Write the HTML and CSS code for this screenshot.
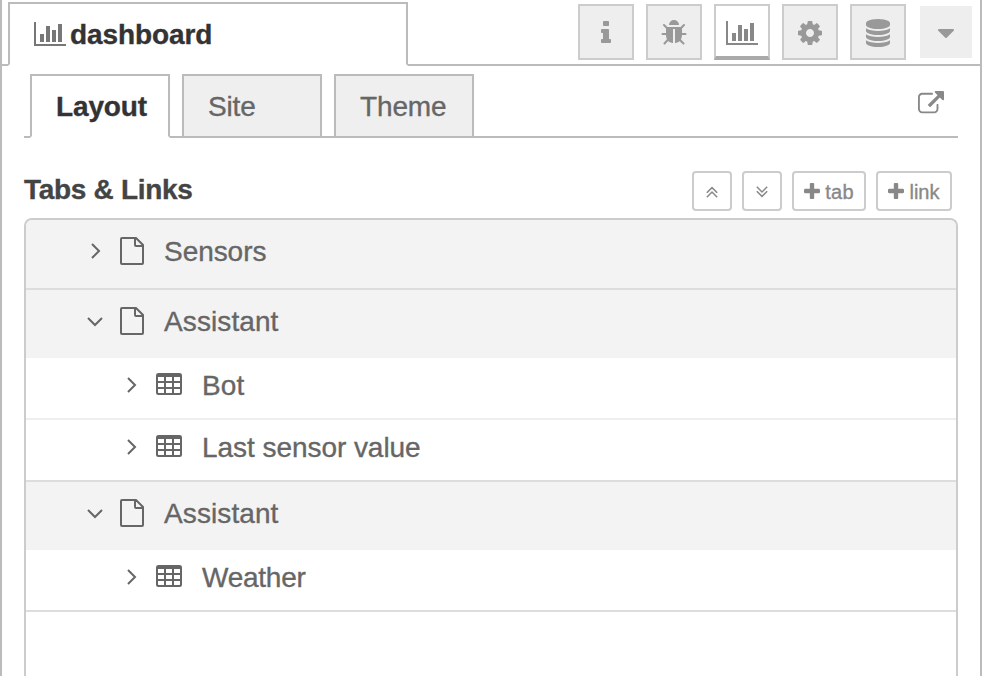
FILE: index.html
```
<!DOCTYPE html>
<html lang="en">
<head>
<meta charset="utf-8">
<title>dashboard</title>
<link rel="stylesheet" href="styles.css">
</head>
<body>
<svg class="defs" aria-hidden="true">
  <symbol id="chart" viewBox="0 0 2048 1792"><path d="M640 896v512h-256v-512h256zm384-512v1024h-256v-1024h256zm1024 1152v128h-2048v-1536h128v1408h1920zm-640-896v768h-256v-768h256zm384-384v1152h-256v-1152h256z"/></symbol>
  <symbol id="file" viewBox="0 0 24 28"><path class="line" d="M16 1H2Q1 1 1 2V26Q1 27 2 27H22Q23 27 23 26V8ZM15 1V8Q15 9 16 9H23"/></symbol>
  <symbol id="table" viewBox="0 0 26 22"><path fill-rule="evenodd" d="M2.5 0H23.5Q26 0 26 2.5V19.5Q26 22 23.500 22H2.500Q0 22 0 19.500V2.500Q0 0 2.500 0ZM2 4V8H8V4ZM10 4V8H16V4ZM18 4V8H24V4ZM2 10V14H8V10ZM10 10V14H16V10ZM18 10V14H24V10ZM2 16V19.500L2.500 20H8V16ZM10 16V20H16V16ZM18 16V20H23.500L24 19.500V16Z"/></symbol>
  <symbol id="right" viewBox="0 0 18 18"><path class="line" d="M6 2 13 9 6 16"/></symbol>
  <symbol id="down" viewBox="0 0 18 18"><path class="line" d="M2 6 9 13 16 6"/></symbol>
  <symbol id="plus" viewBox="192 128 1408 1408"><path d="M1600 736v192q0 40-28 68t-68 28h-416v416q0 40-28 68t-68 28h-192q-40 0-68-28t-28-68v-416h-416q-40 0-68-28t-28-68v-192q0-40 28-68t68-28h416v-416q0-40 28-68t68-28h192q40 0 68 28t28 68v416h416q40 0 68 28t28 68z"/></symbol>
</svg>
<div class="sidebar">
  <header class="topbar">
    <div class="main-tab"><svg class="chart"><use href="#chart"/></svg><span>dashboard</span></div>
    <nav class="tools">
      <button class="tool"><svg viewBox="0 0 1792 1792"><path d="M1216 1344v128q0 26-19 45t-45 19h-512q-26 0-45-19t-19-45v-128q0-26 19-45t45-19h64v-384h-64q-26 0-45-19t-19-45v-128q0-26 19-45t45-19h384q26 0 45 19t19 45v576h64q26 0 45 19t19 45zm-128-1152v192q0 26-19 45t-45 19h-256q-26 0-45-19t-19-45v-192q0-26 19-45t45-19h256q26 0 45 19t19 45z"/></svg></button>
      <button class="tool"><svg viewBox="0 0 1792 1792"><path d="M1696 960q0 26-19 45t-45 19h-224q0 171-67 290l208 209q19 19 19 45t-19 45q-18 19-45 19t-45-19l-198-197q-5 5-15 13t-42 28.500-65 36.500-82 29-97 13v-896h-128v896q-51 0-101.500-13.500t-87-33-66-39-43.500-32.500l-15-14-183 207q-20 21-48 21-24 0-43-16-19-18-20.500-44.500t15.500-46.500l202-227q-58-114-58-274h-224q-26 0-45-19t-19-45 19-45 45-19h224v-294l-173-173q-19-19-19-45t19-45 45-19 45 19l173 173h844l173-173q19-19 45-19t45 19 19 45-19 45l-173 173v294h224q26 0 45 19t19 45zm-480-576h-640q0-133 93.500-226.500t226.500-93.500 226.500 93.500 93.500 226.500z"/></svg></button>
      <button class="tool active"><svg class="chart"><use href="#chart"/></svg></button>
      <button class="tool"><svg viewBox="0 0 1792 1792"><path d="M1152 896q0-106-75-181t-181-75-181 75-75 181 75 181 181 75 181-75 75-181zm512-109v222q0 12-8 23t-20 13l-185 28q-19 54-39 91 35 50 107 138 10 12 10 25t-9 23q-27 37-99 108t-94 71q-12 0-26-9l-138-108q-44 23-91 38-16 136-29 186-7 28-36 28h-222q-14 0-24.500-8.500t-11.500-21.500l-28-184q-49-16-90-37l-141 107q-10 9-25 9-14 0-25-11-126-114-165-168-7-10-7-23 0-12 8-23 15-21 51-66.500t54-70.500q-27-50-41-99l-183-27q-13-2-21-12.500t-8-23.500v-222q0-12 8-23t19-13l186-28q14-46 39-92-40-57-107-138-10-12-10-24 0-10 9-23 26-36 98.500-107.500t94.500-71.500q13 0 26 10l138 107q44-23 91-38 16-136 29-186 7-28 36-28h222q14 0 24.500 8.500t11.500 21.500l28 184q49 16 90 37l142-107q9-9 24-9 13 0 25 10 129 119 165 170 7 8 7 22 0 12-8 23-15 21-51 66.500t-54 70.500q26 50 41 98l183 28q13 2 21 12.500t8 23.500z"/></svg></button>
      <button class="tool"><svg viewBox="0 0 1792 1792"><path d="M896 768q237 0 443-43t325-127v170q0 69-103 128t-280 93.500-385 34.500-385-34.500-280-93.500-103-128v-170q119 84 325 127t443 43zm0 768q237 0 443-43t325-127v170q0 69-103 128t-280 93.500-385 34.500-385-34.500-280-93.500-103-128v-170q119 84 325 127t443 43zm0-384q237 0 443-43t325-127v170q0 69-103 128t-280 93.500-385 34.500-385-34.500-280-93.500-103-128v-170q119 84 325 127t443 43zm0-1152q208 0 385 34.500t280 93.500 103 128v128q0 69-103 128t-280 93.500-385 34.500-385-34.500-280-93.500-103-128v-128q0-69 103-128t280-93.500 385-34.500z"/></svg></button>
      <button class="tool more"><svg viewBox="0 0 1792 1792"><path d="M1408 704q0 26-19 45l-448 448q-19 19-45 19t-45-19l-448-448q-19-19-19-45t19-45 45-19h896q26 0 45 19t19 45z"/></svg></button>
    </nav>
  </header>
  <nav class="subtabs">
    <div class="subtab selected">Layout</div>
    <div class="subtab">Site</div>
    <div class="subtab">Theme</div>
    <svg class="external" viewBox="0 0 1792 1792"><path d="M1408 928v320q0 119-84.500 203.500t-203.500 84.500h-832q-119 0-203.500-84.500t-84.500-203.500v-832q0-119 84.500-203.500t203.500-84.500h704q14 0 23 9t9 23v64q0 14-9 23t-23 9h-704q-66 0-113 47t-47 113v832q0 66 47 113t113 47h832q66 0 113-47t47-113v-320q0-14 9-23t23-9h64q14 0 23 9t9 23zm384-864v512q0 26-19 45t-45 19-45-19l-176-176-652 652q-10 10-23 10t-23-10l-114-114q-10-10-10-23t10-23l652-652-176-176q-19-19-19-45t19-45 45-19h512q26 0 45 19t19 45z"/></svg>
  </nav>
  <section class="section-head">
    <h2>Tabs &amp; Links</h2>
    <div class="actions">
      <button class="action square"><svg viewBox="0 0 12 12"><path class="line" d="M.8 6.800 6 1.600 11.200 6.800M.8 11.200 6 6 11.200 11.200"/></svg></button>
      <button class="action square"><svg viewBox="0 0 12 12"><path class="line" d="M.8 .8 6 6 11.200 .8M.8 5.200 6 10.400 11.200 5.200"/></svg></button>
      <button class="action add-tab"><svg class="plus"><use href="#plus"/></svg><span>tab</span></button>
      <button class="action add-link"><svg class="plus"><use href="#plus"/></svg><span>link</span></button>
    </div>
  </section>
  <main class="tree">
    <div class="row tab"><svg class="chev"><use href="#right"/></svg><svg class="file"><use href="#file"/></svg><span>Sensors</span></div>
    <div class="row tab open"><svg class="chev"><use href="#down"/></svg><svg class="file"><use href="#file"/></svg><span class="assistant">Assistant</span></div>
    <div class="row group"><svg class="chev"><use href="#right"/></svg><svg class="table"><use href="#table"/></svg><span class="bot">Bot</span></div>
    <div class="row group last"><svg class="chev"><use href="#right"/></svg><svg class="table"><use href="#table"/></svg><span>Last sensor value</span></div>
    <div class="row tab open"><svg class="chev"><use href="#down"/></svg><svg class="file"><use href="#file"/></svg><span class="assistant">Assistant</span></div>
    <div class="row group last"><svg class="chev"><use href="#right"/></svg><svg class="table"><use href="#table"/></svg><span class="weather">Weather</span></div>
  </main>
</div>
</body>
</html>
```
FILE: styles.css
```
* { box-sizing: border-box; }
body {
  margin: 0;
  background: #fff;
  color: #666;
  font: 28px/32px "Liberation Sans", Arial, sans-serif;
  -webkit-text-stroke: 0.35px currentColor;
}
svg { display: block; flex: none; fill: currentColor; }
.defs { display: none; }
.line { fill: none; stroke: currentColor; stroke-width: 2; }
button { font: inherit; margin: 0; padding: 0; }

.sidebar {
  display: flex;
  flex-direction: column;
  height: 100vh;
  overflow: hidden;
  border: solid #bbb;
  border-width: 0 2px;
}

.topbar {
  display: flex;
  flex: none;
  justify-content: space-between;
  height: 66px;
  padding: 2px 8px 0 6px;
  border-bottom: 2px solid #bbb;
}
.main-tab {
  display: flex;
  width: 400px;
  height: 64px;
  padding: 15px 24px 0;
  gap: 4px;
  border: 2px solid #bbb;
  border-bottom-color: #fff;
  background: #fff;
  color: #333;
  font-weight: bold;
  letter-spacing: -0.1px;
}
.chart { width: 32px; height: 28px; }
.main-tab .chart { margin-top: 1px; color: #777; }

.tools { display: flex; gap: 12px; padding-top: 2px; }
.tool {
  display: flex;
  align-items: center;
  justify-content: center;
  width: 56px;
  height: 56px;
  padding-top: 2px;
  border: 2px solid #ccc;
  background: #eee;
  color: #999;
}
.tool svg { width: 28px; height: 28px; }
.tool svg.chart { width: 32px; }
.tool.active {
  padding-top: 4px;
  border-bottom: 4px solid #aaa;
  background: #fff;
  color: #888;
}
.tool.more { width: 52px; height: 52px; margin: 2px 0 0 2px; border: 0; }

.subtabs {
  display: flex;
  flex: none;
  gap: 12px;
  height: 64px;
  margin: 8px 22px 0;
  padding-left: 6px;
  border-bottom: 2px solid #bbb;
}
.subtab {
  width: 140px;
  height: 62px;
  padding: 15px 24px 13px;
  border: 2px solid #bbb;
  border-bottom: 0;
  background: #efefef;
  letter-spacing: -0.15px;
}
.subtab.selected {
  height: 64px;
  border-bottom: 2px solid #fff;
  background: #fff;
  color: #333;
  font-weight: bold;
}
.external { width: 26px; height: 26px; margin: 17px 14px 0 auto; color: #888; }

.section-head {
  display: flex;
  flex: none;
  align-items: flex-start;
  justify-content: space-between;
  height: 80px;
  padding: 33px 28px 0 22px;
}
h2 {
  margin: 3px 0 0;
  color: #444;
  font-size: 28px;
  line-height: 32px;
  letter-spacing: -0.3px;
}
.actions { display: flex; gap: 10px; }
.action {
  display: flex;
  align-items: center;
  justify-content: center;
  gap: 5px;
  height: 40px;
  border: 2px solid #ccc;
  border-radius: 4px;
  background: #fff;
  color: #888;
  font-size: 20px;
  line-height: 24px;
}
.square { width: 40px; padding-top: 2px; }
.square svg { width: 12px; height: 12px; }
.square .line { stroke-width: 1.500; }
.add-tab { width: 74px; }
.add-link { width: 76px; }
.action span { padding-top: 2px; }
.add-tab span { letter-spacing: 0.2px; }
.plus { width: 16px; height: 16px; }

.tree {
  flex: 1;
  margin: 0 22px;
  border: 2px solid #ccc;
  border-bottom: 0;
  border-radius: 8px 8px 0 0;
  overflow: hidden;
}
.row { display: flex; align-items: center; }
.row span { padding-top: 2px; letter-spacing: -0.05px; }
.row .assistant, .row .bot { letter-spacing: 0.1px; }
.row .weather { letter-spacing: -0.25px; }
.row.tab {
  height: 70px;
  padding: 0 0 6px 60px;
  border-bottom: 2px solid #ddd;
  background: #f3f3f3;
}
.row.tab.open { height: 68px; border-bottom: 0; }
.row.group {
  height: 62px;
  padding: 0 0 6px 96px;
  border-bottom: 2px solid #eee;
}
.row.group.last { border-bottom-color: #ddd; }
.chev { width: 18px; height: 18px; }
.file { width: 24px; height: 28px; margin: 0 20px 0 16px; }
.table { width: 26px; height: 22px; margin: 0 20px 0 16px; }
.group .table { margin-top: -2px; }
```
